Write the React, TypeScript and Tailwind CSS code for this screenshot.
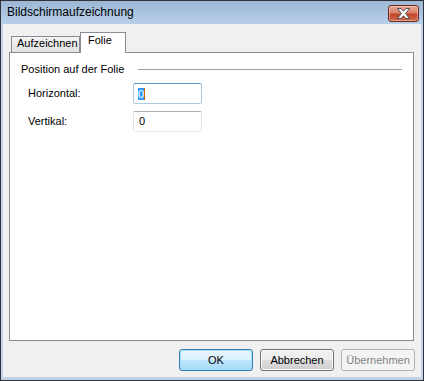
import React from "react";

const font = { fontFamily: '"Liberation Sans", Arial, sans-serif' };

function CloseX() {
  return (
    <svg width="15" height="11" viewBox="0 0 15 11">
      <path
        d="M1.5 0.5 H5 L7.5 3.2 L10 0.5 H13.5 L9.6 5.5 L13.5 10.5 H10 L7.5 7.8 L5 10.5 H1.5 L5.4 5.5 Z"
        fill="#ffffff"
        stroke="#4d4d4d"
        strokeWidth="1"
        strokeLinejoin="round"
      />
    </svg>
  );
}

export default function App() {
  return (
    <div
      className="w-[424px] h-[381px] border border-[#2f3338] bg-[#bfd4eb] flex flex-col text-[11px] text-black"
      style={font}
    >
      {/* Title bar */}
      <div className="h-[23px] shrink-0 flex items-start justify-between bg-[linear-gradient(to_bottom,#9db7d5,#b7cfe9)]">
        <div className="pl-[6px] pt-[4px] text-[12px] leading-[15px] text-black">
          Bildschirmaufzeichnung
        </div>
        <div className="mt-[4px] mr-[4px] w-[31px] h-[17px] rounded-[3px] border border-[#6a2a1e] bg-[linear-gradient(to_bottom,#e9a996_0%,#d8826b_45%,#c2452b_55%,#cf6a4f_100%)] shadow-[inset_0_0_0_1px_rgba(255,220,210,0.45)] flex items-center justify-center">
          <CloseX />
        </div>
      </div>

      {/* Client */}
      <div className="flex-1 mx-[2px] mb-[3px] bg-[#f0f0f0] flex flex-col pl-[6px] pr-[6px] pt-[8px]">
        {/* Tabs */}
        <div className="h-[20px] flex items-end pl-[2px]">
          <div className="w-[69px] h-[16px] border border-b-0 border-[#898c95] bg-[linear-gradient(to_bottom,#f3f3f3,#e2e2e2)] pl-[5px] leading-[13px]">
            Aufzeichnen
          </div>
          <div className="relative z-10 w-[46px] h-[21px] -mb-px border border-b-0 border-[#898c95] bg-white pl-[7px] pt-[1px] leading-[13px]">
            Folie
          </div>
        </div>

        {/* Panel */}
        <div className="w-[405px] h-[289px] border border-[#898c95] bg-white flex flex-col">
          <div className="mt-[10px] h-[13px] flex items-center pl-[11px] pr-[11px]">
            <span className="leading-[13px]">Position auf der Folie</span>
            <div className="flex-1" />
            <div className="w-[264px] h-px bg-[#a0a0a0]" />
          </div>

          <div className="mt-[7px] h-[21px] flex items-center pl-[18px]">
            <span className="w-[105px] leading-[13px] pb-[1px]">Horizontal:</span>
            <div className="w-[69px] h-[21px] rounded-[2px] border border-[#aecbe6] border-t-[#5a93c8] bg-white flex items-center pl-[4px]">
              <span className="bg-[#3399ff] text-white leading-[12px] h-[12px] border-r border-[#cc6600]">
                0
              </span>
            </div>
          </div>

          <div className="mt-[7px] h-[21px] flex items-center pl-[18px]">
            <span className="w-[105px] leading-[13px] pb-[1px]">Vertikal:</span>
            <div className="w-[69px] h-[21px] rounded-[2px] border border-[#e2e3ea] border-t-[#abadb3] border-b-[#e3e9ef] bg-white flex items-center pl-[5px]">
              <span className="leading-[13px]">0</span>
            </div>
          </div>
        </div>

        {/* Buttons */}
        <div className="mt-[8px] flex justify-end gap-[7px] pr-0">
          <div className="w-[74px] h-[22px] rounded-[3px] border border-[#3c7fb1] bg-[linear-gradient(to_bottom,#eaf6fd_0%,#d9f0fc_50%,#bee6fd_50%,#a7d9f5_100%)] shadow-[inset_0_0_0_1px_#9ee0fb] flex items-center justify-center leading-[13px]">
            OK
          </div>
          <div className="w-[74px] h-[22px] rounded-[3px] border border-[#707070] bg-[linear-gradient(to_bottom,#f2f2f2_0%,#ebebeb_50%,#dddddd_50%,#cfcfcf_100%)] shadow-[inset_0_0_0_1px_#fcfcfc] flex items-center justify-center leading-[13px]">
            Abbrechen
          </div>
          <div className="w-[74px] h-[22px] rounded-[3px] border border-[#adb2b5] bg-[#f4f4f4] text-[#838383] flex items-center justify-center leading-[13px]">
            Übernehmen
          </div>
        </div>
      </div>
    </div>
  );
}
